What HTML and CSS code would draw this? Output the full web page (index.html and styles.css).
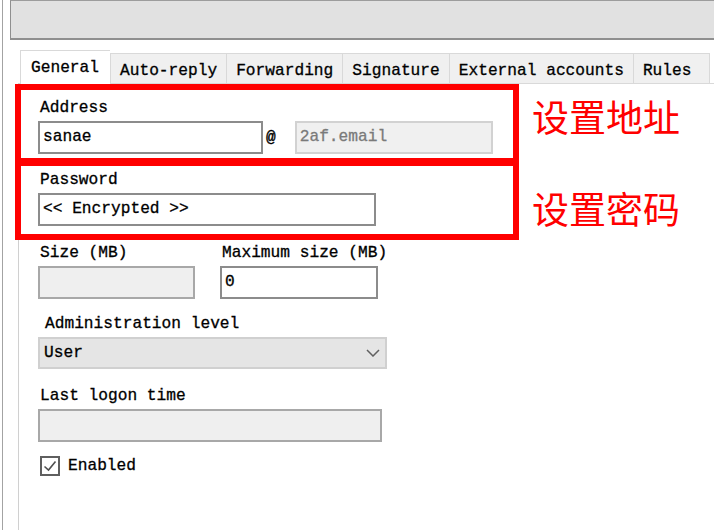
FILE: index.html
```html
<!DOCTYPE html>
<html>
<head>
<meta charset="utf-8">
<link rel="stylesheet" href="styles.css">
</head>
<body>
<div class="window">
  <div class="toolbar"></div>
  <div class="tabctl">
    <div class="tabs">
      <div class="tab active">General</div>
      <div class="tab">Auto-reply</div>
      <div class="tab">Forwarding</div>
      <div class="tab">Signature</div>
      <div class="tab">External accounts</div>
      <div class="tab">Rules</div>
    </div>
    <div class="panel">
      <div class="field f-address">
        <div class="label">Address</div>
        <div class="row">
          <div class="input w-address">sanae</div>
          <span class="at">@</span>
          <div class="input readonly w-domain">2af.email</div>
        </div>
      </div>
      <div class="field f-password">
        <div class="label">Password</div>
        <div class="input w-password">&lt;&lt; Encrypted &gt;&gt;</div>
      </div>
      <div class="field f-size">
        <div class="cols">
          <div class="col">
            <div class="label">Size (MB)</div>
            <div class="input disabled w-size"></div>
          </div>
          <div class="col">
            <div class="label">Maximum size (MB)</div>
            <div class="input w-max">0</div>
          </div>
        </div>
      </div>
      <div class="field f-admin">
        <div class="label label-indent">Administration level</div>
        <div class="select">
          <span>User</span>
          <svg class="chev" width="14" height="8" viewBox="0 0 14 8"><path d="M1 1 L7 7 L13 1" fill="none" stroke="#606060" stroke-width="1.5"/></svg>
        </div>
      </div>
      <div class="field f-logon">
        <div class="label">Last logon time</div>
        <div class="input disabled w-logon"></div>
      </div>
      <div class="check">
        <span class="box"><svg width="16" height="16" viewBox="0 0 16 16"><path d="M2.5 8.5 L6.5 12 L13.5 3.5" fill="none" stroke="#505050" stroke-width="1.6"/></svg></span>
        <span>Enabled</span>
      </div>
    </div>
  </div>
</div>
<div class="callout c-address"></div>
<div class="callout c-password"></div>
<div class="note n-address">设置地址</div>
<div class="note n-password">设置密码</div>
</body>
</html>
```
FILE: styles.css
```css
html, body {
  margin: 0;
  height: 530px;
  overflow: hidden;
  background: #fff;
}
body {
  position: relative;
  font-family: "Liberation Mono", "DejaVu Sans Mono", monospace;
  font-size: 16.2px;
  line-height: 18px;
  color: #000;
  -webkit-text-stroke: 0.3px currentColor;
}
.window {
  margin-left: 2px;
  border-left: 1px solid #a3a3a3;
  height: 530px;
}
.toolbar {
  margin-left: 7px;
  height: 37px;
  background: #e1e1e1;
  border-top: 1px solid #9c9c9c;
  border-left: 1px solid #8f8f8f;
  border-bottom: 2px solid #8f8f8f;
}
.tabctl {
  margin-left: 15px;
  margin-top: 10px;
}
.tabs {
  display: flex;
  align-items: flex-end;
  height: 33px;
  padding-left: 2px;
}
.tab {
  box-sizing: border-box;
  height: 30px;
  padding: 8px 9px 0;
  background: #f0f0f0;
  border: 1px solid #d9d9d9;
  border-bottom: none;
  border-right: none;
  white-space: nowrap;
}
.tab:last-child {
  border-right: 1px solid #d9d9d9;
  padding-right: 18px;
}
.tab.active {
  position: relative;
  z-index: 1;
  height: 34px;
  margin-bottom: -1px;
  padding: 8px 11px 0 10px;
  background: #fff;
}
.panel {
  border-left: 1px solid #d0d0d0;
  border-top: 1px solid #d9d9d9;
  padding: 15px 0 0 19px;
  height: 440px;
}
.label {
  height: 18px;
  margin-bottom: 4px;
  padding-left: 2px;
  white-space: nowrap;
}
.label-indent {
  padding-left: 7px;
}
.input {
  box-sizing: border-box;
  height: 33px;
  border: 2px solid #8c8c8c;
  background: #fff;
  padding: 0 3px;
  line-height: 29px;
  white-space: nowrap;
}
.input.disabled {
  background: #efefef;
  border-color: #a8a8a8;
}
.input.readonly {
  background: #f0f0f0;
  border-color: #d2d2d2;
  color: #7a7a7a;
}
.row {
  display: flex;
  align-items: center;
}
.at {
  margin: 0 19px 0 3px;
  font-weight: bold;
}
.w-address { width: 225px; }
.w-domain { width: 198px; }
.w-password { width: 338px; }
.w-size { width: 157px; }
.w-max { width: 158px; }
.w-logon { width: 344px; }
.f-address { margin-bottom: 17px; }
.f-password { margin-bottom: 18px; }
.f-size { margin-bottom: 16px; }
.f-admin { margin-bottom: 18px; }
.f-logon { margin-bottom: 14px; }
.cols {
  display: flex;
  gap: 25px;
}
.select {
  box-sizing: border-box;
  width: 349px;
  height: 32px;
  background: #e5e5e5;
  border: 2px solid #d0d0d0;
  display: flex;
  align-items: center;
  justify-content: space-between;
  padding: 0 5px 0 4px;
}
.check {
  display: flex;
  align-items: center;
  gap: 8px;
  margin-left: 2px;
  height: 20px;
}
.box {
  box-sizing: border-box;
  width: 20px;
  height: 20px;
  border: 2px solid #5f5f5f;
  display: flex;
  align-items: center;
  justify-content: center;
  background: #fff;
}
.callout {
  position: absolute;
  left: 15px;
  width: 504px;
  height: 80px;
  box-sizing: border-box;
  border: 6px solid #ff0000;
}
.c-address { top: 84px; }
.c-password { top: 160px; }
.note {
  position: absolute;
  left: 532px;
  font-family: "Noto Sans CJK SC", sans-serif;
  font-size: 37px;
  line-height: 37px;
  color: #ff0000;
  white-space: nowrap;
  -webkit-text-stroke: 0;
}
.n-address { top: 98px; }
.n-password { top: 190px; }
```
